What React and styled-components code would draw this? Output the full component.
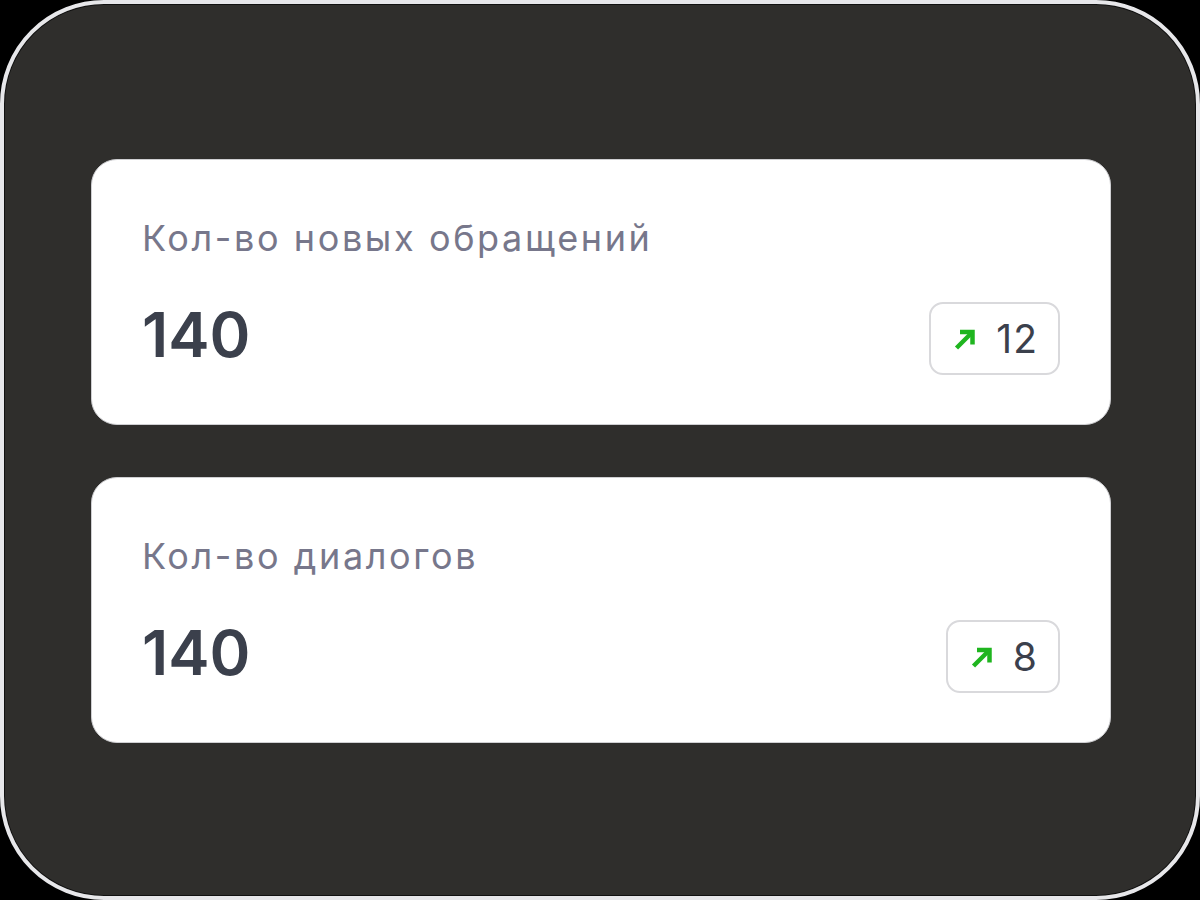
import React from 'react';
import styled, { createGlobalStyle } from 'styled-components';

const GlobalStyle = createGlobalStyle`
  html, body {
    margin: 0;
    padding: 0;
    background: #000;
  }
  body {
    font-family: Inter, "Noto Sans", "Liberation Sans", sans-serif;
  }
`;

const Frame = styled.div`
  box-sizing: border-box;
  width: 1200px;
  height: 900px;
  border: 4px solid #e7e7ea;
  border-radius: 104px;
  background: #2f2e2c;
  box-shadow: inset 0 0 0 1px #111;
  display: flex;
  flex-direction: column;
  gap: 52px;
  padding: 155px 85px 0 87px;
`;

const Card = styled.div`
  background: #fff;
  border: 1.5px solid #cfcfd2;
  border-radius: 26px;
  padding: 58px 50px 49px;
  display: flex;
  flex-direction: column;
  gap: 43px;
`;

const Title = styled.div`
  font-size: 36px;
  line-height: 41px;
  letter-spacing: 2.6px;
  color: #77778b;
  font-weight: 400;
`;

const Row = styled.div`
  display: flex;
  align-items: center;
  justify-content: space-between;
  height: 73px;
`;

const Value = styled.div`
  font-size: 62px;
  line-height: 66px;
  font-weight: 600;
  color: #3b404c;
  margin-top: -8px;
`;

const Badge = styled.div`
  box-sizing: border-box;
  height: 73px;
  display: flex;
  align-items: center;
  gap: 19px;
  padding: 0 20px 0 22px;
  border: 2px solid #d9d9dc;
  border-radius: 14px;
  font-size: 39px;
  letter-spacing: 1px;
  color: #3b404c;
`;

const Arrow = () => (
  <svg width="24" height="24" viewBox="0 0 24 24" fill="none">
    <path d="M3.5 21 L19 5.5" stroke="#1fb51f" strokeWidth="4.5" />
    <path d="M7 5 H19.5 V17.5" stroke="#1fb51f" strokeWidth="4.5" />
  </svg>
);

const stats = [
  { title: 'Кол-во новых обращений', value: 140, delta: 12 },
  { title: 'Кол-во диалогов', value: 140, delta: 8 },
];

export default function App() {
  return (
    <>
      <GlobalStyle />
      <Frame>
        {stats.map((s) => (
          <Card key={s.title}>
            <Title>{s.title}</Title>
            <Row>
              <Value>{s.value}</Value>
              <Badge>
                <Arrow />
                <span>{s.delta}</span>
              </Badge>
            </Row>
          </Card>
        ))}
      </Frame>
    </>
  );
}
